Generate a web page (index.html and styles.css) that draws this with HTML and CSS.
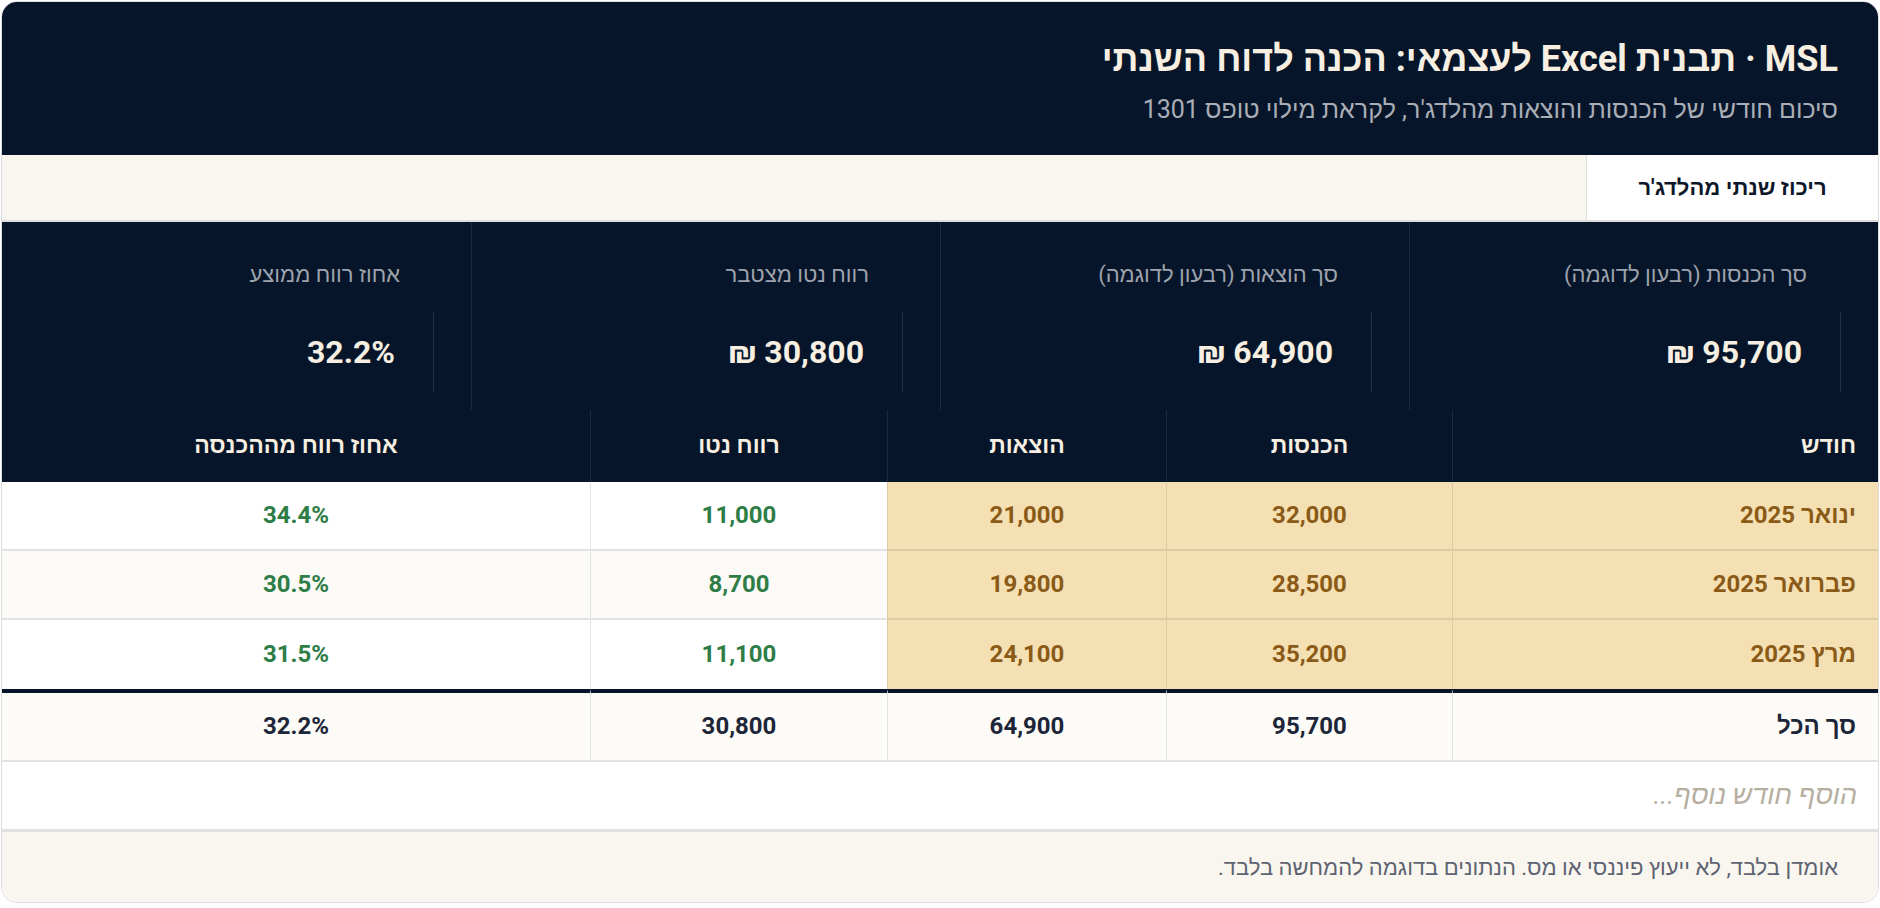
FILE: index.html
```html
<!DOCTYPE html>
<html lang="he" dir="rtl">
<head>
<meta charset="utf-8">
<title>MSL · תבנית Excel לעצמאי</title>
<link rel="stylesheet" href="styles.css">
</head>
<body>
<div class="card">
  <header class="hero">
    <h1 class="title">MSL · תבנית Excel לעצמאי: הכנה לדוח השנתי</h1>
    <p class="subtitle">סיכום חודשי של הכנסות והוצאות מהלדג'ר, לקראת מילוי טופס 1301</p>
  </header>
  <nav class="tabs">
    <div class="tab tab-active">ריכוז שנתי מהלדג'ר</div>
  </nav>
  <section class="stats">
    <div class="stat">
      <div class="stat-label">סך הכנסות (רבעון לדוגמה)</div>
      <div class="stat-value">95,700 ₪</div>
    </div>
    <div class="stat">
      <div class="stat-label">סך הוצאות (רבעון לדוגמה)</div>
      <div class="stat-value">64,900 ₪</div>
    </div>
    <div class="stat">
      <div class="stat-label">רווח נטו מצטבר</div>
      <div class="stat-value">30,800 ₪</div>
    </div>
    <div class="stat">
      <div class="stat-label">אחוז רווח ממוצע</div>
      <div class="stat-value">32.2%</div>
    </div>
  </section>
  <table class="ledger">
    <colgroup>
      <col class="col-month">
      <col class="col-income">
      <col class="col-expense">
      <col class="col-net">
      <col class="col-pct">
    </colgroup>
    <thead>
      <tr>
        <th class="c-month">חודש</th>
        <th>הכנסות</th>
        <th>הוצאות</th>
        <th>רווח נטו</th>
        <th class="c-last">אחוז רווח מההכנסה</th>
      </tr>
    </thead>
    <tbody>
      <tr class="row">
        <td class="c-month hl">ינואר 2025</td>
        <td class="hl">32,000</td>
        <td class="hl">21,000</td>
        <td class="pos">11,000</td>
        <td class="pos c-last">34.4%</td>
      </tr>
      <tr class="row row-alt">
        <td class="c-month hl">פברואר 2025</td>
        <td class="hl">28,500</td>
        <td class="hl">19,800</td>
        <td class="pos">8,700</td>
        <td class="pos c-last">30.5%</td>
      </tr>
      <tr class="row row-last">
        <td class="c-month hl">מרץ 2025</td>
        <td class="hl">35,200</td>
        <td class="hl">24,100</td>
        <td class="pos">11,100</td>
        <td class="pos c-last">31.5%</td>
      </tr>
      <tr class="row row-total">
        <td class="c-month">סך הכל</td>
        <td>95,700</td>
        <td>64,900</td>
        <td>30,800</td>
        <td class="c-last">32.2%</td>
      </tr>
    </tbody>
  </table>
  <div class="add-row">הוסף חודש נוסף...</div>
  <footer class="note">אומדן בלבד, לא ייעוץ פיננסי או מס. הנתונים בדוגמה להמחשה בלבד.</footer>
</div>
</body>
</html>
```

FILE: styles.css
```css
* { box-sizing: border-box; }

html, body {
  margin: 0;
  background: #ffffff;
}

body {
  padding: 1px;
  font-family: Roboto, "Liberation Sans", sans-serif;
  color: #1d2538;
}

.card {
  border: 1px solid #dcdde1;
  border-radius: 16px;
  overflow: hidden;
  background: #ffffff;
}

/* header */
.hero {
  background: #061529;
  height: 153px;
  padding: 36px 40px 0 40px;
}

.title {
  margin: 0;
  font-size: 36px;
  line-height: 42px;
  font-weight: 700;
  color: #f7efe2;
}

.subtitle {
  margin: 15px 0 0 0;
  font-size: 25px;
  line-height: 30px;
  font-weight: 400;
  color: #a9adb6;
}

/* tabs */
.tabs {
  display: flex;
  height: 67px;
  background: #f9f6ef;
  border-bottom: 2px solid #dedede;
}

.tab {
  min-width: 292px;
  padding: 0 40px;
  text-align: center;
  font-size: 22px;
  font-weight: 700;
  line-height: 65px;
  color: #0d1729;
}

.tab-active {
  background: #ffffff;
  border-left: 1px solid #e0e0e0;
}

/* stats */
.stats {
  display: grid;
  grid-template-columns: repeat(4, 1fr);
  background: #061529;
  height: 188px;
}

.stat {
  padding: 39px 37px 0 37px;
  border-left: 1px solid #1c2a3e;
}

.stat:last-child {
  border-left: none;
}

.stat-label {
  padding-right: 34px;
  font-size: 22px;
  line-height: 28px;
  color: #9ea3ad;
}

.stat-value {
  margin-top: 23px;
  height: 80px;
  border-right: 1px solid #223046;
  padding-right: 38px;
  font-size: 32px;
  line-height: 80px;
  font-weight: 700;
  color: #f7efe2;
}

/* table */
.ledger {
  width: 100%;
  table-layout: fixed;
  border-collapse: separate;
  border-spacing: 0;
}

.col-month { width: 426px; }
.col-income { width: 286px; }
.col-expense { width: 279px; }
.col-net { width: 297px; }
.col-pct { width: auto; }

.ledger th {
  background: #061529;
  color: #f7efe2;
  font-size: 23px;
  font-weight: 700;
  line-height: 72px;
  padding: 0;
  text-align: center;
  border-left: 1px solid #1c2a3e;
}

.ledger th.c-last,
.ledger td.c-last {
  border-left: none;
}

.ledger .c-month {
  text-align: right;
  padding-right: 22px;
}

.ledger td {
  padding: 0;
  line-height: 67px;
  font-size: 24px;
  font-weight: 700;
  text-align: center;
  border-bottom: 2px solid #e2e2e5;
  border-left: 1px solid #e2e2e5;
  background: #ffffff;
}

.row-alt td { background: #fcfaf6; }

.ledger td.hl {
  background: #f5e0b3;
  color: #8a5a17;
  border-color: #dccca6;
}

.ledger td.pos {
  color: #2e7d46;
}

.row-alt td.pos { background: #fcfaf6; }

.row-last td {
  border-bottom: none;
  line-height: 69px;
}

.row-total td {
  background: #fcfbf7;
  color: #1d2538;
  line-height: 67px;
  border-top: 4px solid #061529;
  border-left-color: #e2e2e5;
}

/* add row */
.add-row {
  height: 70px;
  padding: 0 21px;
  line-height: 67px;
  font-size: 27px;
  font-style: italic;
  color: #b6ae9f;
  background: #ffffff;
  border-bottom: 3px solid #e2e1de;
}

/* footer */
.note {
  height: 70px;
  padding: 0 40px;
  line-height: 72px;
  font-size: 22px;
  color: #5e6371;
  background: #f9f6ef;
}
```
